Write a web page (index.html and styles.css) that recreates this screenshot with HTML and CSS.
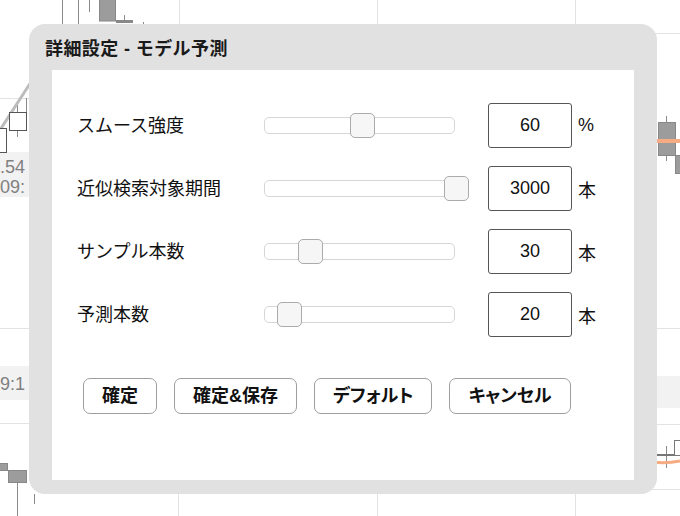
FILE: index.html
```html
<!DOCTYPE html>
<html lang="ja">
<head>
<meta charset="utf-8">
<title>詳細設定 - モデル予測</title>
<link rel="stylesheet" href="styles.css">
</head>
<body>
<div class="stage">
  <svg class="chart" width="680" height="516" viewBox="0 0 680 516" xmlns="http://www.w3.org/2000/svg">
    <g stroke="#e3e3e3" stroke-width="1" fill="none">
      <line x1="179.5" y1="0" x2="179.5" y2="30"/>
      <line x1="377.5" y1="0" x2="377.5" y2="30"/>
      <line x1="575.5" y1="0" x2="575.5" y2="30"/>
      <line x1="178.5" y1="490" x2="178.5" y2="516"/>
      <line x1="377.5" y1="490" x2="377.5" y2="516"/>
      <line x1="575.5" y1="490" x2="575.5" y2="516"/>
      <line x1="0" y1="98.5" x2="40" y2="98.5"/>
      <line x1="0" y1="328.5" x2="40" y2="328.5"/>
      <line x1="0" y1="423.5" x2="40" y2="423.5"/>
      <line x1="640" y1="33.5" x2="680" y2="33.5"/>
      <line x1="640" y1="328.5" x2="680" y2="328.5"/>
      <line x1="640" y1="424.5" x2="680" y2="424.5"/>
      <line x1="640" y1="489.5" x2="680" y2="489.5"/>
    </g>
    <rect x="0" y="152" width="40" height="45" fill="#f2f2f2"/>
    <rect x="0" y="366" width="40" height="34" fill="#f2f2f2"/>
    <rect x="640" y="376" width="40" height="32" fill="#f2f2f2"/>
    <text x="0" y="173" class="axis">.54</text>
    <text x="0" y="193" class="axis">09:</text>
    <text x="0" y="390" class="axis">9:1</text>
    <g stroke="#8a8a8a" stroke-width="1">
      <line x1="62.5" y1="0" x2="62.5" y2="26"/>
      <line x1="78.5" y1="0" x2="78.5" y2="26"/>
      <line x1="89.5" y1="0" x2="89.5" y2="12"/>
      <line x1="124.5" y1="15" x2="124.5" y2="22"/>
      <line x1="143.5" y1="22" x2="143.5" y2="26"/>
      <line x1="666.5" y1="116" x2="666.5" y2="161"/>
      <line x1="666.5" y1="446" x2="666.5" y2="468"/>
      <line x1="17.5" y1="482" x2="17.5" y2="516"/>
      <line x1="34.5" y1="494" x2="34.5" y2="504"/>
      <line x1="17.5" y1="105" x2="17.5" y2="137"/>
      <line x1="26.5" y1="98" x2="26.5" y2="112"/>
    </g>
    <rect x="99.5" y="-2" width="16" height="23" fill="#9c9c9c" stroke="#888"/>
    <rect x="116.5" y="20.5" width="16" height="2" fill="#888" stroke="#888"/>
    <line x1="0" y1="130" x2="31" y2="82" stroke="#bdbdbd" stroke-width="3"/>
    <rect x="-2.5" y="128.5" width="9" height="24" fill="#fff" stroke="#555"/>
    <rect x="9.5" y="112.5" width="17" height="18" fill="#fff" stroke="#555"/>
    <rect x="8.5" y="470.5" width="18" height="12" fill="#9c9c9c" stroke="#888"/>
    <rect x="-1.5" y="463.5" width="9" height="7" fill="#9c9c9c" stroke="#888"/>
    <rect x="658.5" y="122.5" width="17" height="33" fill="#9c9c9c" stroke="#888"/>
    <rect x="675.5" y="155.5" width="8" height="18" fill="#9c9c9c" stroke="#888"/>
    <line x1="652" y1="141" x2="680" y2="141" stroke="#f6ab82" stroke-width="4"/>
    <rect x="674.5" y="440.5" width="8" height="15" fill="#fff" stroke="#777"/>
    <line x1="657" y1="455" x2="674" y2="455" stroke="#777" stroke-width="2"/>
    <path d="M652 462 Q666 464 680 461" stroke="#f6ab82" stroke-width="3" fill="none"/>
  </svg>

  <div class="dialog">
    <div class="dialog-title">詳細設定 - モデル予測</div>
    <div class="dialog-body">
      <div class="rows">
        <div class="row">
          <div class="label">スムース強度</div>
          <div class="slider"><div class="thumb" style="left:85px"></div></div>
          <div class="value">60</div>
          <div class="unit">%</div>
        </div>
        <div class="row">
          <div class="label">近似検索対象期間</div>
          <div class="slider"><div class="thumb" style="left:179px"></div></div>
          <div class="value">3000</div>
          <div class="unit">本</div>
        </div>
        <div class="row">
          <div class="label">サンプル本数</div>
          <div class="slider"><div class="thumb" style="left:33px"></div></div>
          <div class="value">30</div>
          <div class="unit">本</div>
        </div>
        <div class="row">
          <div class="label">予測本数</div>
          <div class="slider"><div class="thumb" style="left:12px"></div></div>
          <div class="value">20</div>
          <div class="unit">本</div>
        </div>
      </div>
      <div class="buttons">
        <button class="btn">確定</button>
        <button class="btn">確定&amp;保存</button>
        <button class="btn">デフォルト</button>
        <button class="btn">キャンセル</button>
      </div>
    </div>
  </div>
</div>
</body>
</html>
```

FILE: styles.css
```css
html, body {
  margin: 0;
  padding: 0;
  background: #ffffff;
}

body {
  font-family: "Liberation Sans", "Noto Sans CJK JP", sans-serif;
  color: #1a1a1a;
}

.stage {
  position: relative;
  width: 680px;
  height: 516px;
  overflow: hidden;
}

.chart {
  position: absolute;
  left: 0;
  top: 0;
}

.axis {
  font-family: "Liberation Sans", sans-serif;
  font-size: 18px;
  fill: #808080;
}

.dialog {
  position: absolute;
  left: 29px;
  top: 24px;
  width: 628px;
  height: 470px;
  background: #e1e1e1;
  border-radius: 16px;
  display: flex;
  flex-direction: column;
  box-sizing: border-box;
  padding: 0 23px 14px 23px;
}

.dialog-title {
  height: 46px;
  display: flex;
  align-items: center;
  margin-left: -7px;
  font-size: 18px;
  font-weight: bold;
  color: #1a1a1a;
  letter-spacing: 0.4px;
}

.dialog-body {
  flex: 1;
  background: #ffffff;
  padding: 33px 0 0 25px;
  display: flex;
  flex-direction: column;
}

.rows {
  display: flex;
  flex-direction: column;
  gap: 18px;
}

.row {
  display: flex;
  align-items: center;
  height: 45px;
}

.label {
  width: 187px;
  font-size: 18px;
  color: #111;
  margin-top: -3px;
}

.slider {
  position: relative;
  width: 191px;
  height: 17px;
  box-sizing: border-box;
  border: 1.5px solid #d6d6d6;
  border-radius: 5px;
  background: #fff;
}

.thumb {
  position: absolute;
  top: -5px;
  width: 25px;
  height: 25px;
  box-sizing: border-box;
  background: #f6f6f6;
  border: 1.5px solid #ababab;
  border-radius: 5px;
}

.value {
  margin-left: 33px;
  width: 84px;
  height: 45px;
  box-sizing: border-box;
  border: 1px solid #555;
  border-radius: 3px;
  display: flex;
  align-items: center;
  justify-content: center;
  font-size: 18px;
  color: #111;
}

.unit {
  margin-left: 6px;
  font-size: 18px;
  color: #111;
}

.buttons {
  display: flex;
  gap: 17px;
  margin-top: 41px;
  padding-left: 6px;
}

.btn {
  font-family: "Liberation Sans", "Noto Sans CJK JP", sans-serif;
  font-feature-settings: "palt";
  height: 36px;
  padding: 0 18px;
  background: #ffffff;
  border: 1px solid #9e9e9e;
  border-radius: 7px;
  font-size: 18px;
  font-weight: bold;
  color: #111;
  line-height: 1;
}
```
